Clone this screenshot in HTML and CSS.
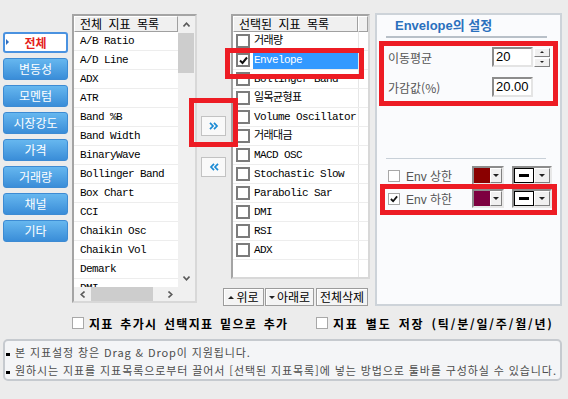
FILE: index.html
```html
<!DOCTYPE html>
<html lang="ko">
  <head>
    <meta charset="UTF-8" />
    <meta name="viewport" content="width=device-width, initial-scale=1.0" />
    <title>지표 설정</title>
    <link rel="stylesheet" href="styles.css">
  </head>
  <body>
    <div class="window">
      <div class="top">
        <div class="tabs">
          <div class="tab tab-on">전체</div>
          <div class="tab">변동성</div>
          <div class="tab">모멘텀</div>
          <div class="tab">시장강도</div>
          <div class="tab">가격</div>
          <div class="tab">거래량</div>
          <div class="tab">채널</div>
          <div class="tab">기타</div>
        </div>

        <div class="list all-list">
          <div class="head"><span class="ko">전체 지표 목록</span></div>
          <div class="vscroll">
            <div class="sb-btn">
              <svg width="7" height="5" viewBox="0 0 7 5"><polyline points="0.5,4.5 3.5,1.2 6.5,4.5" /></svg>
            </div>
            <div class="vthumb"></div>
            <div class="sb-btn sb-end">
              <svg width="7" height="5" viewBox="0 0 7 5"><polyline points="0.5,0.5 3.5,3.8 6.5,0.5" /></svg>
            </div>
          </div>
          <div class="rows">
            <div class="row">A/B Ratio</div>
            <div class="row">A/D Line</div>
            <div class="row">ADX</div>
            <div class="row">ATR</div>
            <div class="row">Band %B</div>
            <div class="row">Band Width</div>
            <div class="row">BinaryWave</div>
            <div class="row">Bollinger Band</div>
            <div class="row">Box Chart</div>
            <div class="row">CCI</div>
            <div class="row">Chaikin Osc</div>
            <div class="row">Chaikin Vol</div>
            <div class="row">Demark</div>
            <div class="row">DMI</div>
          </div>
          <div class="hscroll">
            <div class="sb-btn">
              <svg width="5" height="7" viewBox="0 0 5 7"><polyline points="4.5,0.5 1.2,3.5 4.5,6.5" /></svg>
            </div>
            <div class="hthumb"></div>
            <div class="sb-btn sb-end">
              <svg width="5" height="7" viewBox="0 0 5 7"><polyline points="0.5,0.5 3.8,3.5 0.5,6.5" /></svg>
            </div>
          </div>
          <div class="corner"></div>
        </div>

        <div class="move">
          <div class="move-btn">
            <svg width="10" height="8" viewBox="0 0 10 8"><polyline points="1,0.8 4,4 1,7.2" /><polyline points="5,0.8 8,4 5,7.2" /></svg>
          </div>
          <div class="move-btn">
            <svg width="10" height="8" viewBox="0 0 10 8"><polyline points="5,0.8 2,4 5,7.2" /><polyline points="9,0.8 6,4 9,7.2" /></svg>
          </div>
        </div>

        <div class="sel-col">
          <div class="list sel-list">
            <div class="sel-head">
              <span class="head-cell ko">선택된 지표 목록</span>
              <span class="head-end"></span>
            </div>
            <div class="sel-row"><div class="sel-cell"><span class="chk"></span><span class="name ko">거래량</span></div></div>
            <div class="sel-row on">
              <div class="sel-cell">
                <span class="chk">
                  <svg width="9" height="9" viewBox="0 0 9 9"><polyline points="1,4.5 3.5,7 8,1.5" /></svg>
                </span>
                <span class="name">Envelope</span>
              </div>
            </div>
            <div class="sel-row"><div class="sel-cell"><span class="chk"></span><span class="name">Bollinger Band</span></div></div>
            <div class="sel-row"><div class="sel-cell"><span class="chk"></span><span class="name ko">일목균형표</span></div></div>
            <div class="sel-row"><div class="sel-cell"><span class="chk"></span><span class="name">Volume Oscillator</span></div></div>
            <div class="sel-row"><div class="sel-cell"><span class="chk"></span><span class="name ko">거래대금</span></div></div>
            <div class="sel-row"><div class="sel-cell"><span class="chk"></span><span class="name">MACD OSC</span></div></div>
            <div class="sel-row"><div class="sel-cell"><span class="chk"></span><span class="name">Stochastic Slow</span></div></div>
            <div class="sel-row"><div class="sel-cell"><span class="chk"></span><span class="name">Parabolic Sar</span></div></div>
            <div class="sel-row"><div class="sel-cell"><span class="chk"></span><span class="name">DMI</span></div></div>
            <div class="sel-row"><div class="sel-cell"><span class="chk"></span><span class="name">RSI</span></div></div>
            <div class="sel-row"><div class="sel-cell"><span class="chk"></span><span class="name">ADX</span></div></div>
            <div class="sel-row sel-empty"><div class="sel-cell"></div></div>
          </div>
          <div class="order-btns">
            <div class="btn btn-up"><i class="tri-up"></i>위로</div>
            <div class="btn btn-down"><i class="tri-down"></i>아래로</div>
            <div class="btn btn-clear">전체삭제</div>
          </div>
        </div>

        <div class="settings">
          <div class="set-title">Envelope의 설정</div>
          <div class="set-rule"></div>
          <div class="param">
            <span class="param-label">이동평균</span>
            <span class="field">20</span>
            <span class="spin">
              <span class="spin-btn"><i class="tri-up small"></i></span>
              <span class="spin-btn"><i class="tri-down small"></i></span>
            </span>
          </div>
          <div class="param param-2">
            <span class="param-label">가감값(%)</span>
            <span class="field">20.00</span>
          </div>
          <div class="set-sep"></div>
          <div class="env">
            <span class="cb"></span>
            <span class="env-label">Env 상한</span>
            <span class="combo"><span class="swatch swatch-up"></span><span class="drop"><i class="tri-down"></i></span></span>
            <span class="combo combo-line"><span class="linebox"><i></i></span><span class="drop"><i class="tri-down"></i></span></span>
          </div>
          <div class="env env-2">
            <span class="cb">
              <svg width="9" height="9" viewBox="0 0 9 9"><polyline points="1,4.5 3.5,7 8,1.5" /></svg>
            </span>
            <span class="env-label">Env 하한</span>
            <span class="combo"><span class="swatch swatch-down"></span><span class="drop"><i class="tri-down"></i></span></span>
            <span class="combo combo-line"><span class="linebox"><i></i></span><span class="drop"><i class="tri-down"></i></span></span>
          </div>
        </div>

        <div class="mark mark-move"></div>
        <div class="mark mark-row"></div>
        <div class="mark mark-params"></div>
        <div class="mark mark-env"></div>
      </div>

      <div class="options">
        <label class="opt opt-first"><span class="cb"></span>지표 추가시 선택지표 밑으로 추가</label>
        <label class="opt opt-second"><span class="cb"></span>지표 별도 저장 (틱/분/일/주/월/년)</label>
      </div>

      <div class="info">
        <p><span class="dash"></span>본 지표설정 창은 Drag &amp; Drop이 지원됩니다.</p>
        <p><span class="dash"></span>원하시는 지표를 지표목록으로부터 끌어서 [선택된 지표목록]에 넣는 방법으로 툴바를 구성하실 수 있습니다.</p>
      </div>
    </div>
  </body>
</html>
```

FILE: styles.css
```css
* {
  box-sizing: border-box;
}
body {
  margin: 0;
  background-color: #ececec;
  font-family: "Noto Sans CJK KR", sans-serif;
  font-size: 12px;
  color: #000;
}
.window {
  position: relative;
  width: 568px;
  height: 399px;
  overflow: hidden;
}
.top {
  display: flex;
  align-items: flex-start;
  height: 306px;
}

/* category tabs */
.tabs {
  display: flex;
  flex-direction: column;
  gap: 5px;
  width: 65px;
  margin: 32px 0 0 3px;
}
.tab {
  position: relative;
  height: 22px;
  line-height: 20px;
  text-align: center;
  color: #fff;
  border: 1px solid #3d8bd3;
  border-radius: 3px;
  background: linear-gradient(#66b7ef, #3a8dd8);
}
.tab-on {
  height: 21px;
  line-height: 17px;
  background: #fff;
  border: 2px solid #4a92e0;
  color: #e4221c;
  font-weight: bold;
}
.tab-on::before {
  content: "";
  position: absolute;
  left: 1px;
  top: 5px;
  border-top: 3px solid transparent;
  border-bottom: 3px solid transparent;
  border-left: 3px solid #2f6fc0;
}

/* list boxes */
.list {
  background-color: #fff;
  border: 2px solid;
  border-color: #a4a4a4 #d8d8d8 #d8d8d8 #a4a4a4;
}
.ko {
  font-family: "Noto Sans CJK KR", sans-serif;
  font-size: 12px;
  letter-spacing: 0;
  word-spacing: 3px;
}
.all-list {
  display: grid;
  grid-template-columns: 104px 17px;
  grid-template-rows: 16px 255px 14px;
  width: 125px;
  height: 289px;
  margin: 14px 0 0 4px;
}
.head,
.head-cell {
  background-color: #f0f0f0;
  border: 1px solid;
  border-color: #fff #a0a0a0 #a0a0a0 #fff;
  padding-left: 5px;
  line-height: 14px;
}
.head {
  grid-column: 1;
  grid-row: 1;
}
.vscroll {
  grid-column: 2;
  grid-row: 1 / 3;
  display: flex;
  flex-direction: column;
  background-color: #f0f0f0;
}
.sb-btn {
  display: flex;
  align-items: center;
  justify-content: center;
  height: 17px;
  flex: none;
}
.sb-btn svg polyline {
  fill: none;
  stroke: #5a5a5a;
  stroke-width: 1.6;
}
.sb-end {
  margin-top: auto;
}
.vthumb {
  height: 40px;
  margin: 0 1px 0 0;
  background-color: #cdcdcd;
}
.rows {
  grid-column: 1;
  grid-row: 2;
  overflow: hidden;
}
.row {
  height: 19px;
  line-height: 18px;
  padding-left: 6px;
  border-bottom: 1px solid #ededed;
  font-family: "Liberation Mono", "Noto Sans CJK KR", monospace;
  font-size: 11px;
  letter-spacing: -0.6px;
  white-space: nowrap;
}
.hscroll {
  grid-column: 1;
  grid-row: 3;
  display: flex;
  background-color: #f0f0f0;
}
.hscroll .sb-btn {
  width: 16px;
  height: 14px;
}
.hscroll .sb-end {
  margin: 0 0 0 auto;
}
.hthumb {
  width: 62px;
  margin-left: 1px;
  background-color: #cdcdcd;
}
.corner {
  grid-column: 2;
  grid-row: 3;
  background-color: #f0f0f0;
}

/* move buttons */
.move {
  display: flex;
  flex-direction: column;
  gap: 21px;
  width: 26px;
  padding: 116px 0 0 4px;
}
.move-btn {
  display: flex;
  align-items: center;
  justify-content: center;
  width: 25px;
  height: 20px;
  background-color: #f9f9f9;
  border: 1px solid #c2c2c2;
}
.move-btn svg polyline {
  fill: none;
  stroke: #1a8ad4;
  stroke-width: 1.7;
}

/* selected list */
.sel-col {
  display: flex;
  flex-direction: column;
  align-items: flex-end;
  width: 147px;
  margin-top: 14px;
}
.sel-list {
  width: 139px;
  height: 265px;
  overflow: hidden;
}
.sel-head {
  display: flex;
  height: 16px;
}
.head-cell {
  width: 125px;
}
.head-end {
  flex: 1;
  background-color: #f0f0f0;
  border: 1px solid;
  border-color: #fff #a0a0a0 #a0a0a0 #fff;
}
.sel-row {
  display: flex;
  height: 19px;
  border-bottom: 1px solid #ededed;
}
.sel-empty {
  height: 30px;
  border-bottom: 0;
}
.sel-cell {
  display: flex;
  align-items: center;
  width: 126px;
  padding-left: 3px;
  border-right: 1px solid #e6e6e6;
}
.chk {
  display: flex;
  align-items: center;
  justify-content: center;
  width: 14px;
  height: 14px;
  flex: none;
  border: 2px solid #7c7c7c;
  background-color: #fff;
}
.chk svg polyline,
.cb svg polyline {
  fill: none;
  stroke: #111;
  stroke-width: 2;
}
.name {
  flex: 1;
  height: 18px;
  margin-left: 3px;
  padding-left: 1px;
  line-height: 18px;
  font-family: "Liberation Mono", "Noto Sans CJK KR", monospace;
  font-size: 11px;
  letter-spacing: -0.6px;
  white-space: nowrap;
}
.sel-row.on .name {
  background-color: #3399ff;
  color: #fff;
}
.order-btns {
  display: flex;
  margin: 9px 2px 0 0;
}
.btn {
  display: flex;
  align-items: center;
  justify-content: center;
  gap: 2px;
  height: 18px;
  background-color: #f4f4f4;
  border: 1px solid #9c9c9c;
  box-shadow: inset 1px 1px #fff;
  line-height: 16px;
}
.btn-up {
  width: 41px;
}
.btn-down {
  width: 49px;
  margin-left: 1px;
}
.btn-clear {
  width: 52px;
  margin-left: 2px;
}
.tri-up,
.tri-down {
  display: inline-block;
  width: 0;
  height: 0;
  border-left: 3px solid transparent;
  border-right: 3px solid transparent;
}
.tri-up {
  border-bottom: 3px solid #222;
}
.tri-down {
  border-top: 3px solid #222;
}
.tri-up.small {
  border-bottom-width: 2px;
  border-left-width: 2px;
  border-right-width: 2px;
}
.tri-down.small {
  border-top-width: 2px;
  border-left-width: 2px;
  border-right-width: 2px;
}

/* settings panel */
.settings {
  width: 187px;
  height: 293px;
  margin: 13px 0 0 5px;
  padding-top: 3px;
  background-color: #fafbfd;
  border: 2px solid #cdd3d9;
}
.set-title {
  height: 16px;
  margin-left: 18px;
  line-height: 16px;
  color: #2a70bd;
  font-family: "Liberation Sans", "Noto Sans CJK KR", sans-serif;
  font-size: 13px;
  font-weight: bold;
}
.set-rule {
  width: 161px;
  height: 2px;
  margin: 2px 0 0 9px;
  background-color: #b8c0c8;
}
.param {
  display: flex;
  align-items: center;
  height: 20px;
  margin-top: 9px;
  padding-left: 11px;
}
.param-2 {
  margin-top: 10px;
}
.param-label {
  width: 104px;
  color: #555;
}
.field {
  width: 41px;
  height: 20px;
  padding-left: 2px;
  background-color: #fff;
  border: 2px solid;
  border-color: #8c8c8c #e4e4e4 #e4e4e4 #8c8c8c;
  font-family: "Liberation Sans", sans-serif;
  font-size: 13px;
  line-height: 15px;
}
.spin {
  display: flex;
  flex-direction: column;
  gap: 1px;
  margin-left: 1px;
}
.spin-btn {
  display: flex;
  align-items: center;
  justify-content: center;
  width: 16px;
  height: 9px;
  background-color: #f0f0f0;
  border: 1px solid;
  border-color: #fff #808080 #808080 #fff;
}
.set-sep {
  width: 160px;
  height: 1px;
  margin: 61px 0 0 9px;
  background-color: #c8d0d8;
}
.env {
  display: flex;
  align-items: center;
  height: 19px;
  margin-top: 7px;
  padding-left: 11px;
}
.env-2 {
  margin-top: 4px;
}
.cb {
  display: flex;
  align-items: center;
  justify-content: center;
  width: 12px;
  height: 12px;
  flex: none;
  background-color: #fff;
  border: 1px solid #a8a8a8;
}
.cb svg {
  width: 8px;
  height: 8px;
}
.env-label {
  width: 66px;
  margin-left: 6px;
  color: #555;
  font-family: "Liberation Sans", "Noto Sans CJK KR", sans-serif;
}
.combo {
  display: flex;
  height: 19px;
  border: 2px solid;
  border-color: #8c8c8c #e8e8e8 #e8e8e8 #8c8c8c;
}
.combo-line {
  margin-left: 8px;
}
.swatch {
  width: 16px;
}
.swatch-up {
  background-color: #8a0000;
}
.swatch-down {
  background-color: #7d0040;
}
.drop {
  display: flex;
  align-items: center;
  justify-content: center;
  width: 12px;
  background-color: #f0f0f0;
  border: 1px solid;
  border-color: #fff #808080 #808080 #fff;
}
.combo-line .drop {
  width: 16px;
}
.linebox {
  display: flex;
  align-items: center;
  justify-content: center;
  width: 20px;
  background-color: #fff;
  border: 1px solid #000;
}
.linebox i {
  width: 10px;
  height: 3px;
  background-color: #000;
}

/* red highlight marks */
.mark {
  position: absolute;
  border: 5px solid #ed1c24;
}
.mark-move {
  left: 189px;
  top: 98px;
  width: 49px;
  height: 49px;
}
.mark-row {
  left: 225px;
  top: 48px;
  width: 139px;
  height: 31px;
}
.mark-params {
  left: 379px;
  top: 41px;
  width: 179px;
  height: 65px;
}
.mark-env {
  left: 380px;
  top: 184px;
  width: 177px;
  height: 31px;
}

/* options */
.options {
  display: flex;
  align-items: center;
  height: 14px;
  margin-top: 10px;
  padding-left: 72px;
  font-weight: bold;
  letter-spacing: 1.3px;
  word-spacing: 2px;
}
.opt {
  display: flex;
  align-items: center;
  white-space: nowrap;
}
.opt .cb {
  margin-right: 5px;
}
.opt-first {
  width: 244px;
}
.opt-second {
  letter-spacing: 1.8px;
}

/* info box */
.info {
  width: 559px;
  height: 42px;
  margin: 9px 0 0 3px;
  padding-top: 2px;
  background-color: #f4f5f7;
  border: 2px solid #c6cacf;
  border-radius: 5px;
  color: #4d4d4d;
  font-size: 11px;
  letter-spacing: 0.9px;
}
.info p {
  margin: 0;
  height: 18px;
  line-height: 18px;
  white-space: nowrap;
}
.dash {
  display: inline-block;
  width: 4px;
  height: 3px;
  margin: 0 5px 0 1px;
  vertical-align: middle;
  background-color: #000;
}
```
